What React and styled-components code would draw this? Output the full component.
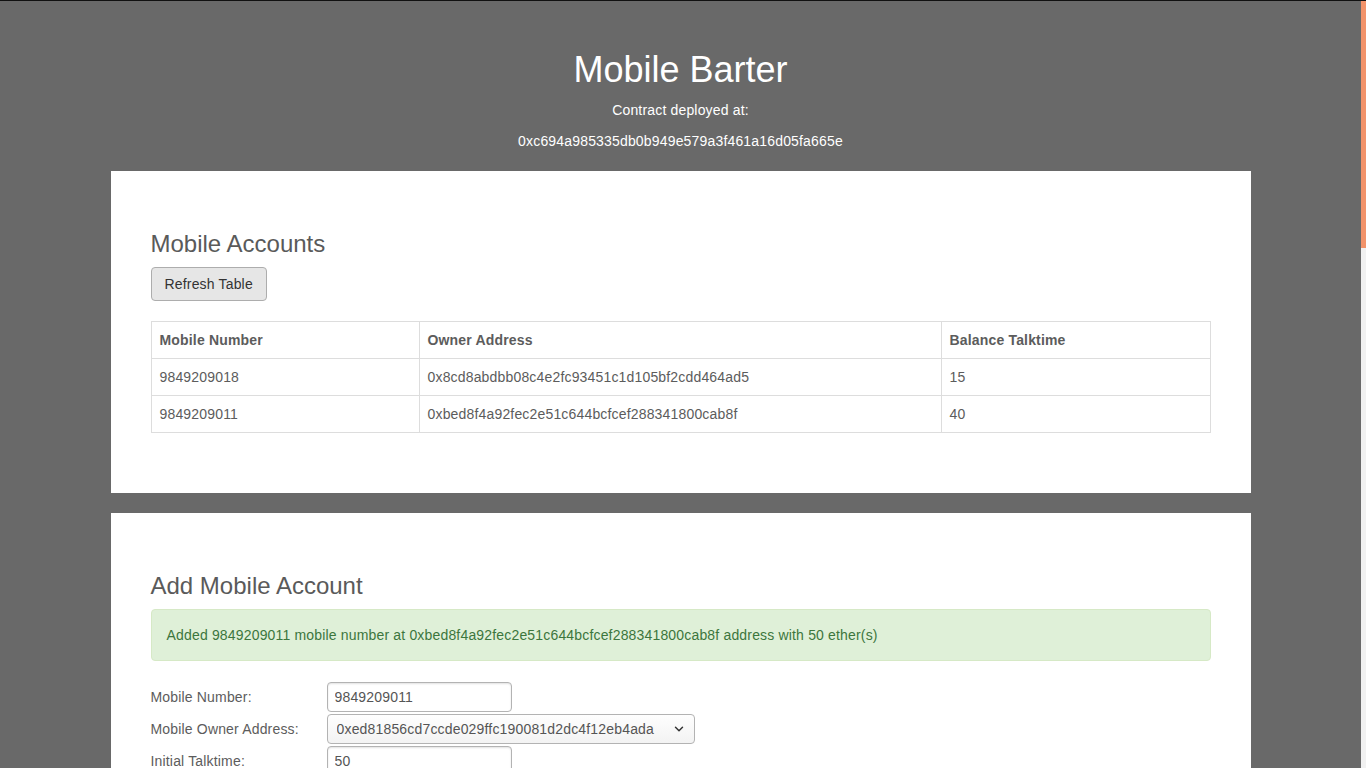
import React from 'react';
import styled, { createGlobalStyle } from 'styled-components';
import { ChevronDown } from 'lucide-react';

const GlobalStyle = createGlobalStyle`
  *, *::before, *::after { box-sizing: border-box; }
  html { background: #696969; }
  body {
    margin: 0;
    border-top: 1px solid #111;
    background: #696969;
    font-family: "Liberation Sans", Arial, Helvetica, sans-serif;
    font-size: 14px;
    line-height: 20px;
    letter-spacing: 0.17px;
    color: #5c5c5c;
  }
`;

const Page = styled.div`
  min-height: 2377px;
  margin-right: 5px;
`;

// the browser's scrollbar as it shows in the picture
const ScrollTrack = styled.div`
  position: fixed;
  top: 1px;
  right: 0;
  bottom: 0;
  width: 5px;
  background: #f1f1f1;
`;

const ScrollThumb = styled.div`
  height: 247px;
  background: #f2936a;
`;

const Header = styled.header`
  text-align: center;
  color: #fff;
  padding: 29px 0 9px;
`;

const Title = styled.h1`
  margin: 20px 0 10px;
  font-size: 36px;
  line-height: 39.6px;
  font-weight: normal;
  letter-spacing: 0;
`;

const HeaderLine = styled.p`
  margin: 0 0 11px;
`;

const Panel = styled.section`
  width: 1140px;
  margin: 0 auto 20px;
  background: #fff;
  padding: 40px;
`;

const PanelTitle = styled.h3`
  margin: 20px 0 10px;
  font-size: 24px;
  line-height: 26.4px;
  font-weight: normal;
  letter-spacing: 0;
  color: #5a5a5a;
`;

const Button = styled.button`
  display: inline-block;
  padding: 6px 13px;
  font-family: inherit;
  font-size: 14px;
  line-height: 20px;
  letter-spacing: inherit;
  color: #333;
  background: #e6e6e6;
  border: 1px solid #adadad;
  border-radius: 4px;
  cursor: pointer;
`;

const Table = styled.table`
  width: 100%;
  margin: 20px 0;
  border-collapse: collapse;
  border: 1px solid #ddd;
`;

const Th = styled.th`
  padding: 8px;
  border: 1px solid #ddd;
  text-align: left;
  font-weight: bold;
  width: ${({ w }) => w};
`;

const Td = styled.td`
  padding: 8px;
  border: 1px solid #ddd;
`;

const Alert = styled.div`
  padding: 15px;
  margin-bottom: 21px;
  border: 1px solid #d6e9c6;
  border-radius: 4px;
  background: #dff0d8;
  color: #3c763d;
`;

const Form = styled.form`
  display: grid;
  grid-template-columns: 176px auto;
  row-gap: 2px;
  align-items: center;
  justify-items: start;
`;

const Label = styled.label`
  color: #5c5c5c;
`;

const Input = styled.input`
  width: ${({ w }) => w || '185px'};
  height: 30px;
  padding: 0 7px;
  font-family: inherit;
  font-size: 14px;
  letter-spacing: inherit;
  color: #555;
  background: #fff;
  border: 1px solid #b3b3b3;
  border-radius: 4px;
  box-shadow: inset 0 1px 2px rgba(0, 0, 0, 0.12);
`;

const SelectWrap = styled.div`
  position: relative;
  width: 368px;
`;

const Select = styled.select`
  appearance: none;
  width: 100%;
  height: 30px;
  padding: 0 30px 0 9px;
  font-family: inherit;
  font-size: 14px;
  letter-spacing: inherit;
  color: #555;
  background: linear-gradient(#fefefe, #f3f3f3);
  border: 1px solid #b3b3b3;
  border-radius: 4px;
`;

const Chevron = styled(ChevronDown)`
  position: absolute;
  right: 9px;
  top: 8px;
  pointer-events: none;
  color: #333;
`;

const accounts = [
  { number: '9849209018', owner: '0x8cd8abdbb08c4e2fc93451c1d105bf2cdd464ad5', balance: 15 },
  { number: '9849209011', owner: '0xbed8f4a92fec2e51c644bcfcef288341800cab8f', balance: 40 },
];

export default function App() {
  return (
    <Page>
      <GlobalStyle />
      <ScrollTrack>
        <ScrollThumb />
      </ScrollTrack>
      <Header>
        <Title>Mobile Barter</Title>
        <HeaderLine>Contract deployed at:</HeaderLine>
        <HeaderLine>0xc694a985335db0b949e579a3f461a16d05fa665e</HeaderLine>
      </Header>

      <Panel>
        <PanelTitle>Mobile Accounts</PanelTitle>
        <Button type="button">Refresh Table</Button>
        <Table>
          <thead>
            <tr>
              <Th w="268px">Mobile Number</Th>
              <Th w="522px">Owner Address</Th>
              <Th>Balance Talktime</Th>
            </tr>
          </thead>
          <tbody>
            {accounts.map((a) => (
              <tr key={a.number}>
                <Td>{a.number}</Td>
                <Td>{a.owner}</Td>
                <Td>{a.balance}</Td>
              </tr>
            ))}
          </tbody>
        </Table>
      </Panel>

      <Panel>
        <PanelTitle>Add Mobile Account</PanelTitle>
        <Alert>
          Added 9849209011 mobile number at 0xbed8f4a92fec2e51c644bcfcef288341800cab8f address with 50 ether(s)
        </Alert>
        <Form onSubmit={(e) => e.preventDefault()}>
          <Label htmlFor="mobile">Mobile Number:</Label>
          <Input id="mobile" defaultValue="9849209011" />
          <Label htmlFor="owner">Mobile Owner Address:</Label>
          <SelectWrap>
            <Select id="owner" defaultValue="0xed81856cd7ccde029ffc190081d2dc4f12eb4ada">
              <option>0xed81856cd7ccde029ffc190081d2dc4f12eb4ada</option>
            </Select>
            <Chevron size={14} strokeWidth={2.5} />
          </SelectWrap>
          <Label htmlFor="talktime">Initial Talktime:</Label>
          <Input id="talktime" defaultValue="50" />
        </Form>
      </Panel>
    </Page>
  );
}
